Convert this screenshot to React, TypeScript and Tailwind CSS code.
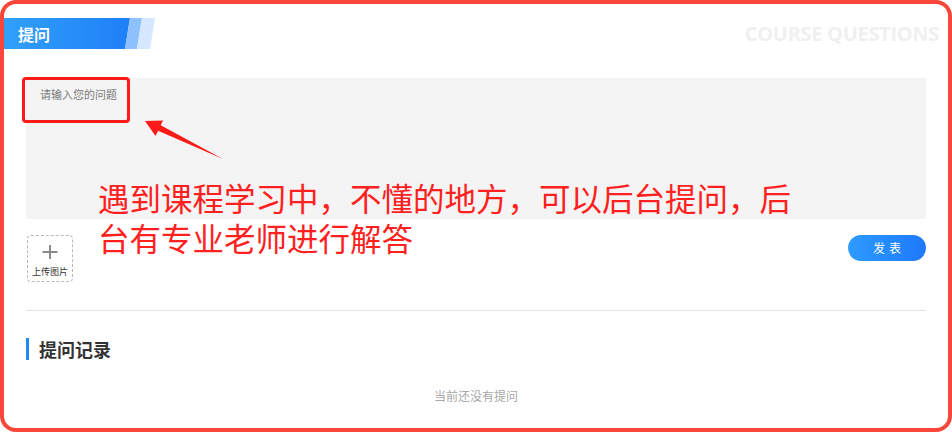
import React from "react";

export default function App() {
  return (
    <div className="relative w-[952px] h-[432px] bg-white overflow-hidden font-['Noto_Sans_CJK_SC',sans-serif]">
      {/* header */}
      <div className="flex items-center justify-between pt-[18px] pr-[13px]">
        <div className="relative w-[160px] h-[31px] flex items-center pl-[18px]">
          <svg className="absolute inset-0" width="160" height="31" viewBox="0 0 160 31">
            <defs>
              <linearGradient id="hg" x1="0" y1="0" x2="1" y2="0">
                <stop offset="0" stopColor="#31a2f9" />
                <stop offset="1" stopColor="#1f7ff8" />
              </linearGradient>
            </defs>
            <polygon points="0,0 130,0 125,31 0,31" fill="url(#hg)" />
            <polygon points="130,0 142,0 137,31 125,31" fill="#8fc1ff" />
            <polygon points="142,0 155,0 150,31 137,31" fill="#d6e8ff" />
          </svg>
          <span className="relative text-white text-[16px] font-bold leading-[20px]">提问</span>
        </div>
        <span className="font-['Open_Sans',sans-serif] font-bold text-[20px] leading-[24px] text-[#f0f0f0] tracking-[-0.3px]">
          COURSE QUESTIONS
        </span>
      </div>

      <div className="px-[26px]">
        <textarea
          className="block w-full h-[141px] mt-[29px] bg-[#f4f4f4] px-[14px] py-[8px] text-[11px] leading-[16px] text-[#333] placeholder:text-[#7a7a7a] resize-none outline-none"
          placeholder="请输入您的问题"
        />
        <div className="flex items-start justify-between mt-[16px]">
          <div className="ml-[1px] w-[46px] h-[47px] border border-dashed border-[#b8b8b8] rounded-[4px] flex flex-col items-center pt-[8px]">
            <svg width="16" height="16" viewBox="0 0 16 16">
              <path d="M8 1v14M0.5 8h15" stroke="#8a8a8a" strokeWidth="2" fill="none" />
            </svg>
            <span className="mt-[6px] text-[9px] leading-[12px] text-[#333]">上传图片</span>
          </div>
          <button className="w-[78px] h-[26px] rounded-full bg-gradient-to-r from-[#2d9bff] to-[#1f79fb] text-white text-[12px] leading-[26px] tracking-[4px] pl-[4px]">
            发表
          </button>
        </div>
        <div className="mt-[28px] border-t border-[#e3e3e3]" />
        <div className="mt-[27px] flex items-center">
          <div className="w-[3px] h-[22px] bg-[#1e88f5]" />
          <span className="ml-[10px] text-[18px] leading-[22px] font-bold text-[#333]">提问记录</span>
        </div>
        <div className="mt-[28px] text-center text-[12px] leading-[16px] text-[#a8a8a8]">当前还没有提问</div>
      </div>

      {/* annotations */}
      <div className="absolute left-[22px] top-[77px] w-[108px] h-[46px] border-[3px] border-[#ff1a1a] rounded-[4px] pointer-events-none" />
      <svg className="absolute left-0 top-0 pointer-events-none" width="952" height="432" viewBox="0 0 952 432">
        <polygon
          points="145,121 163,120.5 160.7,125.3 223,159 158.1,130.7 155.5,136"
          fill="#ff1a1a"
        />
      </svg>
      <div className="absolute left-[98px] top-[177px] text-[31.5px] leading-[40px] text-[#ff2020] whitespace-nowrap pointer-events-none">
        遇到课程学习中，不懂的地方，可以后台提问，后
        <br />
        台有专业老师进行解答
      </div>
      <div className="absolute inset-0 border-[4px] border-[#f8473a] rounded-[16px] pointer-events-none" />
    </div>
  );
}
